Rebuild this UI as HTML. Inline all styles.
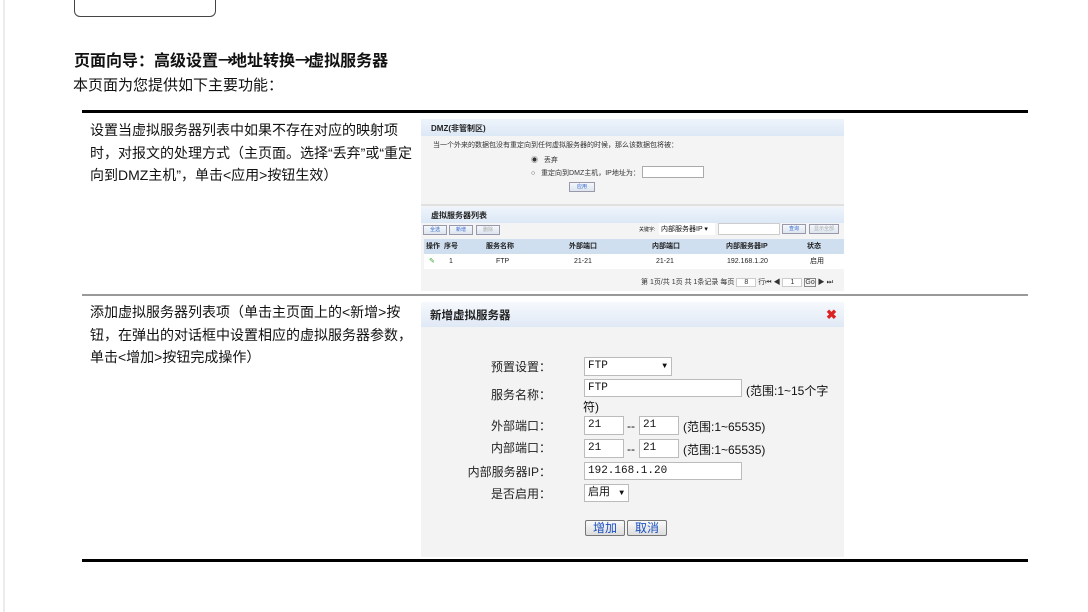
<!DOCTYPE html>
<html><head><meta charset="utf-8"><style>
*{margin:0;padding:0;box-sizing:border-box}
body{width:1088px;height:612px;background:#fff;position:relative;overflow:hidden;font-family:"Liberation Sans","Noto Sans CJK SC",sans-serif;color:#111}
.a{position:absolute}
.t{font-size:14px;line-height:22.5px;width:325px}
.ar{font-family:"Noto Sans CJK SC",sans-serif;letter-spacing:-3px}
.hb{background:linear-gradient(#eef4fb,#dce8f6);font-weight:bold;color:#222}
.inp{background:#fff;border:1px solid #bbb;font-family:"Liberation Mono","Noto Sans CJK SC",monospace;font-size:11px;padding-left:3px;line-height:17px}
.btn{border:1px solid #777;background:linear-gradient(#fafafa,#ddd);color:#1a4fc0;font-size:12px;text-align:center;line-height:14px;border-radius:2px}
.sb{border:1px solid #99a;background:linear-gradient(#f4f7fb,#dde5ef);font-size:5px;color:#36c;text-align:center;line-height:9px}
.lab{font-size:12px;text-align:right;width:130px;color:#222}
.r{font-size:12px}
</style></head><body>
<div class="a" style="left:3px;top:0;width:2px;height:612px;background:#ececec"></div>
<div class="a" style="left:74px;top:-10px;width:142px;height:27px;border:1px solid #444;border-radius:6px"></div>
<div class="a" style="left:74px;top:47px;font-size:16px;font-weight:bold">页面向导：高级设置<span class="ar">→</span>地址转换<span class="ar">→</span>虚拟服务器</div>
<div class="a" style="left:73px;top:74px;font-size:15px">本页面为您提供如下主要功能：</div>
<div class="a" style="left:82px;top:110px;width:946px;height:3px;background:#000"></div>
<div class="a" style="left:82px;top:294px;width:946px;height:2px;background:#999"></div>
<div class="a" style="left:82px;top:559px;width:946px;height:3px;background:#000"></div>
<div class="a t" style="left:90px;top:119px">设置当虚拟服务器列表中如果不存在对应的映射项时，对报文的处理方式（主页面。选择“丢弃”或“重定向到DMZ主机”，单击&lt;应用&gt;按钮生效）</div>
<div class="a t" style="left:90px;top:301px">添加虚拟服务器列表项（单击主页面上的&lt;新增&gt;按钮，在弹出的对话框中设置相应的虚拟服务器参数，单击&lt;增加&gt;按钮完成操作）</div>

<div class="a" style="left:421px;top:119px;width:423px;height:172px;background:#f4f4f4;font-size:7px;overflow:hidden">
 <div class="a hb" style="left:0;top:0;width:423px;height:17px;padding:4px 10px;font-size:8px">DMZ(非管制区)</div>
 <div class="a" style="left:12px;top:21px;color:#333">当一个外来的数据包没有重定向到任何虚拟服务器的时候，那么该数据包将被：</div>
 <div class="a" style="left:110px;top:36px;color:#333">◉ &nbsp; 丢弃</div>
 <div class="a" style="left:110px;top:49px;color:#333">○ &nbsp; 重定向到DMZ主机，IP地址为：</div>
 <div class="a" style="left:221px;top:47px;width:62px;height:12px;background:#fff;border:1px solid #aaa"></div>
 <div class="a sb" style="left:148px;top:63px;width:26px;height:10px">应用</div>
 <div class="a" style="left:0;top:85px;width:423px;height:2px;background:#e0e0e0"></div>
 <div class="a hb" style="left:0;top:88px;width:423px;height:16px;padding:3px 10px;font-size:8px">虚拟服务器列表</div>
 <div class="a sb" style="left:2px;top:106px;width:24px;height:10px">全选</div>
 <div class="a sb" style="left:28px;top:106px;width:24px;height:10px">新增</div>
 <div class="a sb" style="left:55px;top:106px;width:24px;height:10px;color:#aaa">删除</div>
 <div class="a" style="left:218px;top:107px;font-size:5px">关键字:</div>
 <div class="a" style="left:238px;top:104px;width:56px;height:12px;background:#fff;font-size:7px;padding:1px 2px">内部服务器IP ▾</div>
 <div class="a" style="left:297px;top:104px;width:62px;height:12px;background:#fff;border:1px solid #ccc"></div>
 <div class="a sb" style="left:361px;top:105px;width:24px;height:10px">查询</div>
 <div class="a sb" style="left:388px;top:105px;width:30px;height:10px;color:#aaa">显示全部</div>
 <div class="a" style="left:3px;top:120px;width:420px;height:15px;background:#cfdff0;font-weight:bold;font-size:7px;line-height:15px;color:#222">
  <span class="a" style="left:2px">操作</span><span class="a" style="left:20px">序号</span><span class="a" style="left:62px">服务名称</span><span class="a" style="left:145px">外部端口</span><span class="a" style="left:228px">内部端口</span><span class="a" style="left:302px">内部服务器IP</span><span class="a" style="left:383px">状态</span>
 </div>
 <div class="a" style="left:3px;top:135px;width:420px;height:15px;background:#fff;font-size:7px;line-height:15px;color:#222">
  <span class="a" style="left:5px;color:#3a3">✎</span><span class="a" style="left:25px">1</span><span class="a" style="left:72px">FTP</span><span class="a" style="left:150px">21-21</span><span class="a" style="left:232px">21-21</span><span class="a" style="left:303px">192.168.1.20</span><span class="a" style="left:386px">启用</span>
 </div>
 <div class="a" style="left:220px;top:158px;font-size:7px;color:#333">第 1页/共 1页 共 1条记录 每页 <span style="display:inline-block;width:20px;background:#fff;border:1px solid #ccc;text-align:center">8</span> 行⏮ ◀ <span style="display:inline-block;width:20px;background:#fff;border:1px solid #ccc;text-align:center">1</span> <span style="border:1px solid #888">Go</span> ▶ ⏭</div>
</div>

<div class="a" style="left:421px;top:302px;width:423px;height:255px;background:#f3f3f3;overflow:hidden">
 <div class="a hb" style="left:0;top:0;width:423px;height:25px;padding:5px 9px;font-size:11.5px;background:linear-gradient(#f6f9fd,#dfe9f5)">新增虚拟服务器</div>
 <div class="a" style="left:405px;top:5px;color:#d22;font-weight:bold;font-size:13px">✖</div>
 <div class="a lab" style="left:0;top:56px">预置设置：</div>
 <div class="a inp" style="left:163px;top:55px;width:88px;height:19px">FTP<span style="position:absolute;right:4px;font-size:8px">▼</span></div>
 <div class="a lab" style="left:0;top:84px">服务名称：</div>
 <div class="a inp" style="left:163px;top:77px;width:158px;height:18px">FTP</div>
 <div class="a r" style="left:325px;top:80px">(范围:1~15个字</div>
 <div class="a r" style="left:162px;top:96px">符)</div>
 <div class="a lab" style="left:0;top:115px">外部端口：</div>
 <div class="a inp" style="left:163px;top:114px;width:40px;height:19px">21</div>
 <div class="a r" style="left:206px;top:117px">--</div>
 <div class="a inp" style="left:218px;top:114px;width:40px;height:19px">21</div>
 <div class="a r" style="left:262px;top:116px">(范围:1~65535)</div>
 <div class="a lab" style="left:0;top:137px">内部端口：</div>
 <div class="a inp" style="left:163px;top:137px;width:40px;height:19px">21</div>
 <div class="a r" style="left:206px;top:140px">--</div>
 <div class="a inp" style="left:218px;top:137px;width:40px;height:19px">21</div>
 <div class="a r" style="left:262px;top:139px">(范围:1~65535)</div>
 <div class="a lab" style="left:0;top:161px">内部服务器IP：</div>
 <div class="a inp" style="left:163px;top:160px;width:158px;height:18px">192.168.1.20</div>
 <div class="a lab" style="left:0;top:183px">是否启用：</div>
 <div class="a inp" style="left:163px;top:182px;width:45px;height:18px">启用<span style="position:absolute;right:4px;font-size:8px">▼</span></div>
 <div class="a btn" style="left:164px;top:218px;width:40px;height:16px">增加</div>
 <div class="a btn" style="left:206px;top:218px;width:40px;height:16px">取消</div>
</div>
</body></html>
